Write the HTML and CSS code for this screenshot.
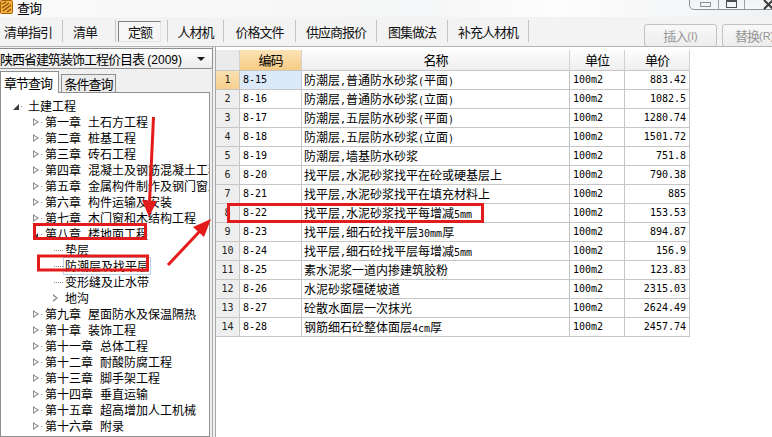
FILE: index.html
```html
<!DOCTYPE html>
<html lang="zh">
<head>
<meta charset="utf-8">
<title>查询</title>
<link rel="stylesheet" href="styles.css">
</head>
<body>
<div class="window">
  <div class="titlebar">
    <svg class="app-icon" viewBox="0 0 13 14" aria-hidden="true">
      <rect x="0.5" y="0.5" width="12" height="13" rx="1" fill="#f4b23a" stroke="#a8640c"/>
      <path d="M2 4 L6 2 M2 8 L9 3 M3 11 L11 5 M7 12 L11 9" stroke="#8a4a08" stroke-width="1.2"/>
    </svg>
    <span class="title">查询</span>
    <div class="winctl">
      <div class="wc wc-min"><span class="ico-min"></span></div>
      <div class="wc wc-max"><span class="ico-max"></span></div>
      <div class="wc wc-close">
        <svg viewBox="0 0 12 10" class="ico-close"><path d="M1 0 L10 9 M10 0 L1 9" stroke="#3b3b3b" stroke-width="2"/></svg>
      </div>
    </div>
  </div>

  <div class="toolbar">
    <div class="tabs">
      <div class="tab t1">清单指引</div>
      <div class="tab t2">清单</div>
      <div class="tab t3 active"><span>定额</span></div>
      <div class="tab t4">人材机</div>
      <div class="tab t5">价格文件</div>
      <div class="tab t6">供应商报价</div>
      <div class="tab t7">图集做法</div>
      <div class="tab t8">补充人材机</div>
    </div>
    <div class="actions">
      <div class="btn b1">插入<span class="acc">(I)</span></div>
      <div class="btn b2">替换<span class="acc">(R)</span></div>
    </div>
  </div>

  <div class="main">
    <div class="left">
      <div class="select">
        <span class="sel-text">陕西省建筑装饰工程价目表<span class="acc"> (2009)</span></span>
        <span class="sel-arrow"></span>
      </div>
      <div class="subtabs">
        <div class="subtab on">章节查询</div>
        <div class="subtab">条件查询</div>
      </div>
      <div class="tree">
        <div class="node l0"><i class="tw open"></i><i class="dot"></i><span class="lbl">土建工程</span></div>
        <div class="node l1"><i class="tw"></i><i class="dot"></i><span class="lbl"><b>第一章</b>土石方工程</span></div>
        <div class="node l1"><i class="tw"></i><i class="dot"></i><span class="lbl"><b>第二章</b>桩基工程</span></div>
        <div class="node l1"><i class="tw"></i><i class="dot"></i><span class="lbl"><b>第三章</b>砖石工程</span></div>
        <div class="node l1"><i class="tw"></i><i class="dot"></i><span class="lbl"><b>第四章</b>混凝土及钢筋混凝土工程</span></div>
        <div class="node l1"><i class="tw"></i><i class="dot"></i><span class="lbl"><b>第五章</b>金属构件制作及钢门窗工程</span></div>
        <div class="node l1"><i class="tw"></i><i class="dot"></i><span class="lbl"><b>第六章</b>构件运输及安装</span></div>
        <div class="node l1"><i class="tw"></i><i class="dot"></i><span class="lbl"><b>第七章</b>木门窗和木结构工程</span></div>
        <div class="node l1"><i class="tw open small"></i><i class="dot"></i><span class="lbl"><b>第八章</b>楼地面工程</span></div>
        <div class="node l2"><i class="hline"></i><span class="lbl">垫层</span></div>
        <div class="node l2"><i class="hline"></i><span class="lbl sel">防潮层及找平层</span></div>
        <div class="node l2"><i class="hline"></i><span class="lbl">变形缝及止水带</span></div>
        <div class="node l2 has-kids"><i class="tw"></i><span class="lbl">地沟</span></div>
        <div class="node l1"><i class="tw"></i><i class="dot"></i><span class="lbl"><b>第九章</b>屋面防水及保温隔热</span></div>
        <div class="node l1"><i class="tw"></i><i class="dot"></i><span class="lbl"><b>第十章</b>装饰工程</span></div>
        <div class="node l1"><i class="tw"></i><i class="dot"></i><span class="lbl"><b>第十一章</b>总体工程</span></div>
        <div class="node l1"><i class="tw"></i><i class="dot"></i><span class="lbl"><b>第十二章</b>耐酸防腐工程</span></div>
        <div class="node l1"><i class="tw"></i><i class="dot"></i><span class="lbl"><b>第十三章</b>脚手架工程</span></div>
        <div class="node l1"><i class="tw"></i><i class="dot"></i><span class="lbl"><b>第十四章</b>垂直运输</span></div>
        <div class="node l1"><i class="tw"></i><i class="dot"></i><span class="lbl"><b>第十五章</b>超高增加人工机械</span></div>
        <div class="node l1"><i class="tw"></i><i class="dot"></i><span class="lbl"><b>第十六章</b>附录</span></div>
      </div>
    </div>

    <div class="right">
      <div class="grid">
        <div class="row hd">
          <div class="c rn"></div>
          <div class="c hc cur">编码</div>
          <div class="c hc">名称</div>
          <div class="c hc">单位</div>
          <div class="c hc">单价</div>
        </div>
        <div class="row first">
          <div class="c rn">1</div><div class="c code">8-15</div>
          <div class="c name">防潮层<span class="a">,</span>普通防水砂浆<span class="a">(</span>平面<span class="a">)</span></div>
          <div class="c unit">100m2</div><div class="c price">883.42</div>
        </div>
        <div class="row">
          <div class="c rn">2</div><div class="c code">8-16</div>
          <div class="c name">防潮层<span class="a">,</span>普通防水砂浆<span class="a">(</span>立面<span class="a">)</span></div>
          <div class="c unit">100m2</div><div class="c price">1082.5</div>
        </div>
        <div class="row">
          <div class="c rn">3</div><div class="c code">8-17</div>
          <div class="c name">防潮层<span class="a">,</span>五层防水砂浆<span class="a">(</span>平面<span class="a">)</span></div>
          <div class="c unit">100m2</div><div class="c price">1280.74</div>
        </div>
        <div class="row">
          <div class="c rn">4</div><div class="c code">8-18</div>
          <div class="c name">防潮层<span class="a">,</span>五层防水砂浆<span class="a">(</span>立面<span class="a">)</span></div>
          <div class="c unit">100m2</div><div class="c price">1501.72</div>
        </div>
        <div class="row">
          <div class="c rn">5</div><div class="c code">8-19</div>
          <div class="c name">防潮层<span class="a">,</span>墙基防水砂浆</div>
          <div class="c unit">100m2</div><div class="c price">751.8</div>
        </div>
        <div class="row">
          <div class="c rn">6</div><div class="c code">8-20</div>
          <div class="c name">找平层<span class="a">,</span>水泥砂浆找平在砼或硬基层上</div>
          <div class="c unit">100m2</div><div class="c price">790.38</div>
        </div>
        <div class="row">
          <div class="c rn">7</div><div class="c code">8-21</div>
          <div class="c name">找平层<span class="a">,</span>水泥砂浆找平在填充材料上</div>
          <div class="c unit">100m2</div><div class="c price">885</div>
        </div>
        <div class="row">
          <div class="c rn">8</div><div class="c code">8-22</div>
          <div class="c name">找平层<span class="a">,</span>水泥砂浆找平每增减<span class="a">5mm</span></div>
          <div class="c unit">100m2</div><div class="c price">153.53</div>
        </div>
        <div class="row">
          <div class="c rn">9</div><div class="c code">8-23</div>
          <div class="c name">找平层<span class="a">,</span>细石砼找平层<span class="a">30mm</span>厚</div>
          <div class="c unit">100m2</div><div class="c price">894.87</div>
        </div>
        <div class="row">
          <div class="c rn">10</div><div class="c code">8-24</div>
          <div class="c name">找平层<span class="a">,</span>细石砼找平层每增减<span class="a">5mm</span></div>
          <div class="c unit">100m2</div><div class="c price">156.9</div>
        </div>
        <div class="row">
          <div class="c rn">11</div><div class="c code">8-25</div>
          <div class="c name">素水泥浆一道内掺建筑胶粉</div>
          <div class="c unit">100m2</div><div class="c price">123.83</div>
        </div>
        <div class="row">
          <div class="c rn">12</div><div class="c code">8-26</div>
          <div class="c name">水泥砂浆礓磋坡道</div>
          <div class="c unit">100m2</div><div class="c price">2315.03</div>
        </div>
        <div class="row">
          <div class="c rn">13</div><div class="c code">8-27</div>
          <div class="c name">砼散水面层一次抹光</div>
          <div class="c unit">100m2</div><div class="c price">2624.49</div>
        </div>
        <div class="row">
          <div class="c rn">14</div><div class="c code">8-28</div>
          <div class="c name">钢筋细石砼整体面层<span class="a">4cm</span>厚</div>
          <div class="c unit">100m2</div><div class="c price">2457.74</div>
        </div>
      </div>
    </div>
  </div>

  <svg class="annot" viewBox="0 0 772 437" aria-hidden="true">
    <g fill="none" stroke="#e41b1b" stroke-width="3">
      <rect x="34.5" y="224.5" width="111" height="14"/>
      <rect x="38.5" y="256" width="109" height="14"/>
      <rect x="228.5" y="204.5" width="254" height="17"/>
      <path d="M153.5 117 L149.5 203"/>
      <path d="M168 265 L200 231"/>
    </g>
    <g fill="#e41b1b">
      <polygon points="142,200 157,201 149,217"/>
      <polygon points="211,219 204,237 193,227"/>
    </g>
  </svg>
</div>
</body>
</html>
```

FILE: styles.css
```css
* { box-sizing: border-box; }
html, body { margin: 0; padding: 0; }
body {
  background: #f0f0f0;
  font-family: "Noto Sans CJK SC", "Noto Sans", sans-serif;
  font-size: 12px;
  color: #000;
  overflow: hidden;
}
.window {
  position: relative;
  width: 772px;
  height: 437px;
  overflow: hidden;
  display: flex;
  flex-direction: column;
}

/* title bar */
.titlebar {
  height: 17px;
  flex: none;
  display: flex;
  align-items: flex-start;
  background: linear-gradient(90deg, #fafafa 0%, #f5f6f7 55%, #fdfdfd 72%, #eff1f3 100%);
}
.app-icon { width: 13px; height: 14px; flex: none; display: block; }
.title {
  margin-left: 4px;
  font-size: 13px;
  letter-spacing: -1px;
  line-height: 15px;
}
.winctl {
  margin-left: auto;
  margin-top: -10px;
  margin-right: -30px;
  height: 20px;
  width: 113px;
  flex: none;
  display: flex;
  border: 1px solid #8d949c;
  border-radius: 0 0 5px 5px;
  background: linear-gradient(#e9ecef, #f7f8f9);
}
.wc { height: 100%; position: relative; border-right: 1px solid #9aa1a8; }
.wc-min { width: 29px; }
.wc-max { width: 26px; }
.wc-close { flex: 1; border-right: 0; }
.ico-min {
  position: absolute; left: 10px; top: 11px;
  width: 11px; height: 5px;
  border: 1px solid #8a9096;
}
.ico-max {
  position: absolute; left: 7px; top: 9px;
  width: 11px; height: 8px;
  border: 1px solid #4a4f55;
  border-top-width: 2px;
}
.ico-close { position: absolute; left: 18px; top: 9px; width: 12px; height: 10px; }

/* toolbar */
.toolbar {
  height: 30px;
  flex: none;
  display: flex;
  border-bottom: 1px solid #b5b5b5;
  background: #f3f3f3;
  overflow: hidden;
}
.tabs { display: flex; padding: 3px 0 4px; flex: none; }
.tab {
  display: flex;
  align-items: center;
  justify-content: center;
  border-right: 1px solid #c4c4c4;
  font-size: 13px;
  letter-spacing: -1px;
  color: #111;
}
.t1 { width: 63px; justify-content: flex-start; padding-left: 4px; }
.t2 { width: 53px; padding-right: 8px; }
.t3 { width: 52px; padding-right: 4px; }
.t4 { width: 56px; }
.t5 { width: 72px; }
.t6 { width: 81px; }
.t7 { width: 71px; }
.t8 { width: 81px; }
.tab.active span {
  display: flex;
  align-items: center;
  height: 21px;
  padding: 0 8px 0 9px;
  border: 1px solid;
  border-color: #808080 #e2e2e2 #e2e2e2 #808080;
  background: #f6f6f6;
}
.actions {
  display: flex;
  gap: 5px;
  margin-left: 115px;
  padding-top: 7px;
  flex: none;
}
.btn {
  height: 23px;
  display: flex;
  align-items: center;
  justify-content: center;
  border: 1px solid #c2c2c2;
  border-radius: 3px;
  background: linear-gradient(#f8f8f8, #ededed);
  color: #969696;
  font-size: 13px;
  letter-spacing: -1px;
}
.b1 { width: 73px; }
.b2 { width: 62px; justify-content: flex-start; padding-left: 12px; }
.acc { font-family: "Liberation Sans", sans-serif; font-size: 11px; letter-spacing: 0; }

/* main */
.main { flex: 1; display: flex; min-height: 0; }
.left {
  width: 213px;
  flex: none;
  display: flex;
  flex-direction: column;
  padding-top: 1px;
  border-right: 1px solid #a9a9a9;
}
.select {
  height: 21px;
  margin-left: -2px;
  width: 215px;
  display: flex;
  align-items: center;
  border: 1px solid #8e8e8e;
  border-radius: 2px;
  background: linear-gradient(#fdfdfd, #ececec);
  padding: 0 0 0 1px;
}
.sel-text {
  flex: 1;
  font-size: 13px;
  letter-spacing: -1px;
  white-space: nowrap;
}
.sel-text .acc { font-size: 12px; }
.sel-arrow {
  width: 0; height: 0;
  margin-right: 7px;
  border-left: 4px solid transparent;
  border-right: 4px solid transparent;
  border-top: 4px solid #1a1a1a;
}
.subtabs {
  height: 22px;
  margin-top: 1px;
  display: flex;
  align-items: flex-end;
  position: relative;
  z-index: 1;
}
.subtab {
  height: 18px;
  width: 55px;
  margin-left: 2px;
  display: flex;
  align-items: center;
  justify-content: center;
  border: 1px solid #8e8f8f;
  border-bottom: 0;
  background: #ececec;
  font-size: 13px;
  letter-spacing: -1px;
}
.subtab.on {
  height: 22px;
  width: 59px;
  margin-left: 0;
  background: #fff;
  justify-content: flex-start;
  padding-left: 3px;
  margin-bottom: -1px;
}
.tree {
  flex: 1;
  width: 210px;
  border: 1px solid #8e8f8f;
  background: #fff;
  padding-top: 5px;
  overflow: hidden;
}
.node {
  height: 16px;
  display: flex;
  align-items: center;
  white-space: nowrap;
  line-height: 16px;
}
.node .lbl b { font-weight: normal; margin-right: 7px; }
.l0 { padding-left: 12px; }
.l1 { padding-left: 32px; }
.l2 { padding-left: 53px; }
.tw {
  flex: none;
  position: relative;
  width: 0; height: 0;
  border-top: 4px solid transparent;
  border-bottom: 4px solid transparent;
  border-left: 6px solid #8c8c8c;
}
.tw::after {
  content: "";
  position: absolute;
  left: -5px; top: -2px;
  border-top: 2px solid transparent;
  border-bottom: 2px solid transparent;
  border-left: 3px solid #fff;
}
.tw.open {
  border-width: 0 0 6px 6px;
  border-style: solid;
  border-color: transparent transparent #3d3d3d transparent;
  margin-top: 2px;
}
.tw.open::after { display: none; }
.tw.open.small { border-width: 0 0 5px 5px; }
.dot {
  flex: none;
  width: 1px; height: 1px;
  background: #8a8a8a;
  margin-left: 2px;
  margin-right: 3px;
}
.l0 .dot { margin-left: 2px; margin-right: 6px; }
.l1 .tw.open + .dot { margin-left: 3px; }
.hline {
  flex: none;
  width: 9px;
  height: 1px;
  border-top: 1px dotted #8a8a8a;
  margin-right: 2px;
}
.has-kids { padding-left: 52px; }
.has-kids .tw { border-left-width: 5px; margin-right: 7px; }
.lbl.sel { outline: 1px solid #bcd3ee; padding: 0 1px; margin-left: -1px; }

/* right grid */
.right {
  flex: 1;
  margin-left: 2px;
  border-left: 1px solid #a7a7a7;
  background: #fff;
  padding-top: 3px;
}
.grid {
  display: grid;
  grid-template-columns: 24px 62px 268px 55px 65px;
}
.row { display: contents; }
.c {
  height: 19px;
  border-right: 1px solid #c6c6c6;
  border-bottom: 1px solid #c6c6c6;
  line-height: 18px;
  white-space: nowrap;
  overflow: hidden;
}
.hd .c {
  height: 21px;
  line-height: 20px;
  background: linear-gradient(#fdfdfd, #eeeeee);
  text-align: center;
  font-size: 13px;
  letter-spacing: -1px;
  border-right-color: #d2d2d2;
}
.hd .c.cur { background: linear-gradient(#fbe3b6, #f6cb84); }
.rn {
  background: #eeeeee;
  text-align: center;
  font-family: "DejaVu Sans Mono", "Liberation Mono", monospace;
  font-size: 10px;
  color: #222;
}
.hd .rn { background: #ebebeb; }
.first .rn { background: linear-gradient(#fbe1b2, #f6cf8d); }
.first .code { background: #dce9f8; }
.code, .unit, .price {
  font-family: "DejaVu Sans Mono", "Liberation Mono", monospace;
  font-size: 10px;
  padding-left: 3px;
}
.price { text-align: right; padding-right: 3px; }
.name { padding-left: 2px; }
.name .a {
  font-family: "DejaVu Sans Mono", "Liberation Mono", monospace;
  font-size: 10px;
}

/* red annotations overlay */
.annot {
  position: absolute;
  left: 0; top: 0;
  width: 772px; height: 437px;
  pointer-events: none;
}
```
